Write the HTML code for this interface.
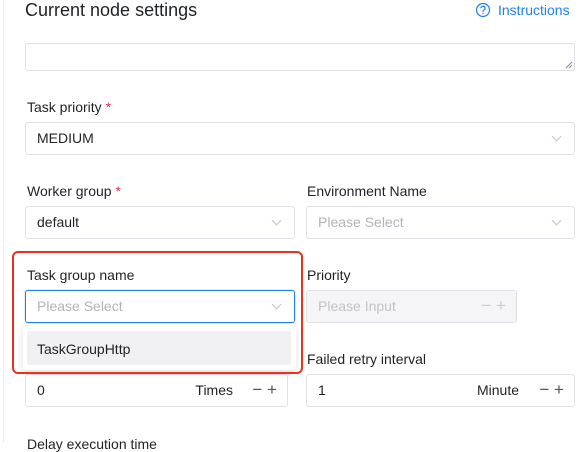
<!DOCTYPE html>
<html><head><style>
*{box-sizing:border-box;margin:0;padding:0}
body{width:586px;height:442px;overflow:hidden;background:#fff;font-family:"Liberation Sans",sans-serif;color:#1f2225;position:relative;font-size:14px}
.a{position:absolute}
.box{position:absolute;border:1px solid #e0e0e6;border-radius:3px;background:#fff}
.lbl{position:absolute;font-size:14px;color:#1f2225}
.req{color:#d03050}
.ph{color:#b4b4b8}
.chev{position:absolute;width:7px;height:7px;border-right:1px solid #c2c2c2;border-bottom:1px solid #c2c2c2;transform:rotate(45deg)}
.txt{position:absolute;left:11px;top:7px;font-size:14px}
.pm{position:absolute;top:5px;font-size:17px;color:#555}
</style></head><body>
<div class="a" style="left:3px;top:0;width:1px;height:442px;background:#ececec"></div>
<div class="a" style="left:25px;top:0;font-size:18px;color:#1f2225">Current node settings</div>
<svg class="a" style="left:475px;top:2px" width="16" height="16" viewBox="0 0 16 16"><circle cx="8" cy="8" r="6.5" fill="none" stroke="#2080f0" stroke-width="1.2"/><path d="M6 6.3a2 2 0 1 1 2.6 1.9c-.4.2-.6.5-.6.9v.6" fill="none" stroke="#2080f0" stroke-width="1.2"/><circle cx="8" cy="11.4" r=".7" fill="#2080f0"/></svg>
<div class="a" style="left:498px;top:2px;color:#2080f0;font-size:14px">Instructions</div>

<div class="box" style="left:25px;top:43px;width:550px;height:28px"></div>
<svg class="a" style="left:565px;top:61px" width="8" height="8"><path d="M1 7L7 1M4 7L7 4" stroke="#888" stroke-width="1"/></svg>

<div class="lbl" style="left:27px;top:99px">Task priority <span class="req">*</span></div>
<div class="box" style="left:25px;top:122px;width:550px;height:33px"><div class="txt">MEDIUM</div><div class="chev" style="right:14px;top:10px"></div></div>

<div class="lbl" style="left:27px;top:183px">Worker group <span class="req">*</span></div>
<div class="box" style="left:25px;top:206px;width:270px;height:33px"><div class="txt">default</div><div class="chev" style="right:14px;top:10px"></div></div>
<div class="lbl" style="left:307px;top:183px">Environment Name</div>
<div class="box" style="left:306px;top:206px;width:269px;height:33px"><div class="txt ph">Please Select</div><div class="chev" style="right:14px;top:10px"></div></div>

<div class="lbl" style="left:27px;top:267px">Task group name</div>
<div class="box" style="left:25px;top:290px;width:270px;height:33px;border-color:#2080f0;box-shadow:0 0 0 1px rgba(32,128,240,.15)"><div class="txt ph">Please Select</div><div class="chev" style="right:14px;top:10px"></div></div>
<div class="lbl" style="left:307px;top:267px">Priority</div>
<div class="box" style="left:306px;top:290px;width:211px;height:33px;background:#f5f5f7"><div class="txt" style="color:#c2c2c6">Please Input</div><div class="pm" style="right:10px;color:#ccc">− +</div></div>

<div class="lbl" style="left:307px;top:351px">Failed retry interval</div>
<div class="box" style="left:25px;top:374px;width:263px;height:33px"><div class="txt">0</div><div class="a" style="right:54px;top:7px">Times</div><div class="pm" style="right:10px">− +</div></div>
<div class="box" style="left:306px;top:374px;width:269px;height:33px"><div class="txt">1</div><div class="a" style="right:55px;top:7px">Minute</div><div class="pm" style="right:10px">− +</div></div>
<div class="lbl" style="left:27px;top:436px">Delay execution time</div>

<div class="a" style="left:23px;top:326px;width:273px;height:44px;background:#fff;box-shadow:0 3px 8px rgba(0,0,0,.12);border-radius:3px"></div>
<div class="a" style="left:27px;top:331px;width:264px;height:34px;background:#f0f0f2;border-radius:3px;padding:10px 0 0 10px">TaskGroupHttp</div>

<div class="a" style="left:12px;top:251px;width:291px;height:123px;border:2px solid #e8321f;border-radius:6px"></div>
</body></html>
